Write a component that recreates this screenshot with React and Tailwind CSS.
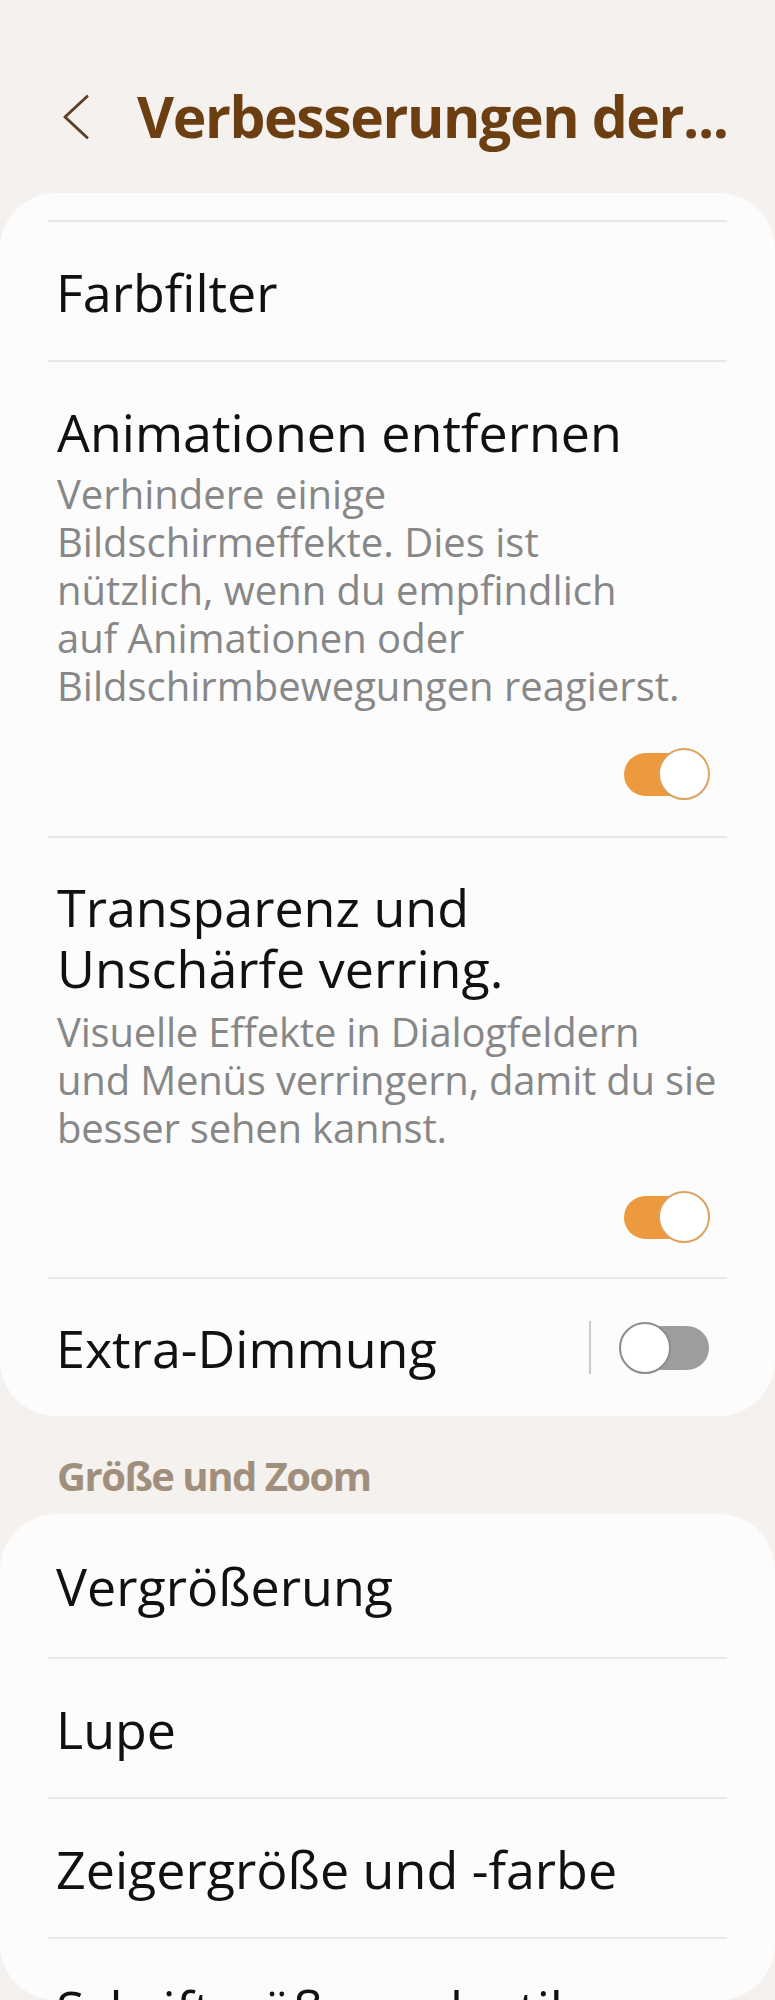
import React from "react";

function Toggle({ on }) {
  return (
    <div className="relative w-[90px] h-[52px]">
      <div
        className={
          on
            ? "absolute left-[4px] right-[8px] top-[5px] h-[43px] rounded-full bg-[#ec9a3d]"
            : "absolute left-[8px] right-[0px] top-[4px] h-[44px] rounded-full bg-[#9d9d9d]"
        }
      />
      <div
        className={
          on
            ? "absolute right-0 top-0 w-[52px] h-[52px] rounded-full bg-white border-[2.5px] border-[#dba35f]"
            : "absolute left-0 top-0 w-[52px] h-[52px] rounded-full bg-white border-[2.5px] border-[#8c8c8c]"
        }
      />
    </div>
  );
}

function Divider() {
  return <div className="mx-[48px] h-[2px] bg-[#e9e7e5]" />;
}

function SimpleRow({ label, h = "h-[138px]" }) {
  return (
    <div className={`${h} flex items-center pl-[56px]`}>
      <span className="text-[52px] leading-[61px] font-medium text-[#111111] whitespace-nowrap">
        {label}
      </span>
    </div>
  );
}

export default function App() {
  return (
    <div className="w-[775px] min-h-[2000px] bg-[#f5f1ee] font-['Open_Sans',sans-serif] overflow-hidden">
      {/* Header */}
      <div className="h-[193px] pt-[40px] flex items-center pl-[63px]">
        <svg width="26" height="44" viewBox="0 0 26 44" className="shrink-0">
          <polyline
            points="24,1.5 2,22 24,42.5"
            fill="none"
            stroke="#5e3f27"
            strokeWidth="3"
            strokeLinecap="round"
            strokeLinejoin="round"
          />
        </svg>
        <h1 className="ml-[48px] text-[57px] leading-[57px] font-bold text-[#6c3f12] whitespace-nowrap tracking-[-1.4px]">
          Verbesserungen der...
        </h1>
      </div>

      {/* Card 1 */}
      <div className="bg-[#fcfcfc] rounded-[56px] pt-[27px]">
        <Divider />
        <SimpleRow label="Farbfilter" />
        <Divider />

        <div className="pt-[39px] pb-[36px]">
          <div className="pl-[57px] text-[52px] leading-[61px] font-medium text-[#111111]">
            Animationen entfernen
          </div>
          <div className="mt-[8px] pl-[57px] text-[40px] leading-[48px] text-[#878787] whitespace-nowrap">
            Verhindere einige
            <br />
            Bildschirmeffekte. Dies ist
            <br />
            nützlich, wenn du empfindlich
            <br />
            auf Animationen oder
            <br />
            Bildschirmbewegungen reagierst.
          </div>
          <div className="mt-[38px] flex justify-end pr-[65px]">
            <Toggle on />
          </div>
        </div>
        <Divider />

        <div className="pt-[38px] pb-[34px]">
          <div className="pl-[57px] text-[52px] leading-[61px] font-medium text-[#111111]">
            Transparenz und
            <br />
            Unschärfe verring.
          </div>
          <div className="mt-[10px] pl-[57px] text-[40px] leading-[48px] text-[#878787] whitespace-nowrap tracking-[-0.2px]">
            Visuelle Effekte in Dialogfeldern
            <br />
            und Menüs verringern, damit du sie
            <br />
            besser sehen kannst.
          </div>
          <div className="mt-[39px] flex justify-end pr-[65px]">
            <Toggle on />
          </div>
        </div>
        <Divider />

        <div className="h-[137px] flex items-center pl-[56px] pr-[66px]">
          <span className="flex-1 text-[52px] leading-[61px] font-medium text-[#111111] whitespace-nowrap">
            Extra-Dimmung
          </span>
          <div className="w-[2px] h-[53px] bg-[#cbcbcb] mr-[28px]" />
          <Toggle on={false} />
        </div>
      </div>

      {/* Section header */}
      <div className="pt-[40px] pb-[18px] pl-[57px] text-[40px] leading-[40px] font-bold text-[#a08f7d] tracking-[-1.5px]">
        Größe und Zoom
      </div>

      {/* Card 2 */}
      <div className="bg-[#fcfcfc] rounded-[56px] h-[486px] overflow-hidden">
        <SimpleRow label="Vergrößerung" h="h-[143px]" />
        <Divider />
        <SimpleRow label="Lupe" />
        <Divider />
        <SimpleRow label="Zeigergröße und -farbe" />
        <Divider />
        <SimpleRow label="Schriftgröße und -stil" />
      </div>
    </div>
  );
}
